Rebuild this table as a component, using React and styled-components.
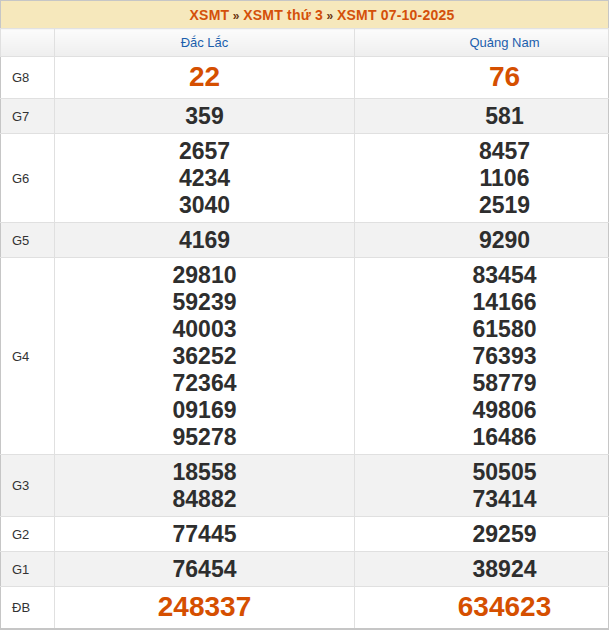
import React from "react";
import styled, { createGlobalStyle } from "styled-components";

const GlobalStyle = createGlobalStyle`
  html, body {
    margin: 0;
    padding: 0;
    background: #fff;
    font-family: "Liberation Sans", Arial, sans-serif;
  }
`;

const results = {
  title: ["XSMT", "XSMT thứ 3", "XSMT 07-10-2025"],
  provinces: ["Đắc Lắc", "Quảng Nam"],
  rows: [
    { label: "G8", big: true, values: [["22"], ["76"]] },
    { label: "G7", values: [["359"], ["581"]] },
    { label: "G6", values: [["2657", "4234", "3040"], ["8457", "1106", "2519"]] },
    { label: "G5", values: [["4169"], ["9290"]] },
    {
      label: "G4",
      values: [
        ["29810", "59239", "40003", "36252", "72364", "09169", "95278"],
        ["83454", "14166", "61580", "76393", "58779", "49806", "16486"],
      ],
    },
    { label: "G3", values: [["18558", "84882"], ["50505", "73414"]] },
    { label: "G2", values: [["77445"], ["29259"]] },
    { label: "G1", values: [["76454"], ["38924"]] },
    { label: "ĐB", big: true, values: [["248337"], ["634623"]] },
  ],
};

const Table = styled.table`
  width: 609px;
  border-collapse: collapse;
  table-layout: fixed;
  border: 1px solid #c6c6c6;
  border-bottom-width: 2px;
`;

const TitleCell = styled.th`
  height: 27px;
  padding: 0 0 0 35px;
  background: #f6e8bc;
  color: #d4500a;
  font-size: 14px;
  letter-spacing: 0.2px;
  font-weight: bold;
  text-align: center;
  border-bottom: 1px solid #e2e2e2;
`;

const Sep = styled.span`
  color: #6b3510;
  font-size: 12px;
`;

// second column content sits a little right of centre
const HeadCell = styled.th`
  height: 27px;
  padding: 0 0 0 ${(p) => (p.$second ? 46 : 0)}px;
  background: linear-gradient(#fcfcfc, #eeeeee);
  color: #1c5fad;
  font-size: 13px;
  font-weight: normal;
  text-align: center;
  border: 1px solid #e0e0e0;
  border-top: none;
`;

const Row = styled.tr`
  background: ${(p) => (p.$shade ? "#f2f2f2" : "#fff")};
`;

const Label = styled.td`
  padding: 0 0 0 11px;
  color: #333;
  font-size: 13px;
  border: 1px solid #e0e0e0;
  border-left: none;
`;

const Cell = styled.td`
  padding: 4px 0 ${(p) => (p.$big ? 5 : 3)}px ${(p) => (p.$second ? 46 : 0)}px;
  text-align: center;
  border: 1px solid #e0e0e0;
  border-right: none;
`;

const Num = styled.div`
  line-height: ${(p) => (p.$big ? "32px" : "27px")};
  font-size: ${(p) => (p.$big ? "28px" : "23px")};
  font-weight: bold;
  color: ${(p) => (p.$big ? "#d54f00" : "#2e2e2e")};
`;

export default function App() {
  return (
    <>
      <GlobalStyle />
      <Table>
        <colgroup>
          <col style={{ width: 54 }} />
          <col style={{ width: 300 }} />
          <col />
        </colgroup>
        <thead>
          <tr>
            <TitleCell colSpan={3}>
              {results.title.map((t, i) => (
                <React.Fragment key={t}>
                  {i > 0 && <Sep> » </Sep>}
                  {t}
                </React.Fragment>
              ))}
            </TitleCell>
          </tr>
          <tr>
            <HeadCell />
            {results.provinces.map((p, j) => (
              <HeadCell key={p} $second={j === 1}>
                {p}
              </HeadCell>
            ))}
          </tr>
        </thead>
        <tbody>
          {results.rows.map((row, i) => (
            <Row key={row.label} $shade={i % 2 === 1}>
              <Label>{row.label}</Label>
              {row.values.map((list, j) => (
                <Cell key={j} $big={row.big} $second={j === 1}>
                  {list.map((n, k) => (
                    <Num key={k} $big={row.big}>
                      {n}
                    </Num>
                  ))}
                </Cell>
              ))}
            </Row>
          ))}
        </tbody>
      </Table>
    </>
  );
}
